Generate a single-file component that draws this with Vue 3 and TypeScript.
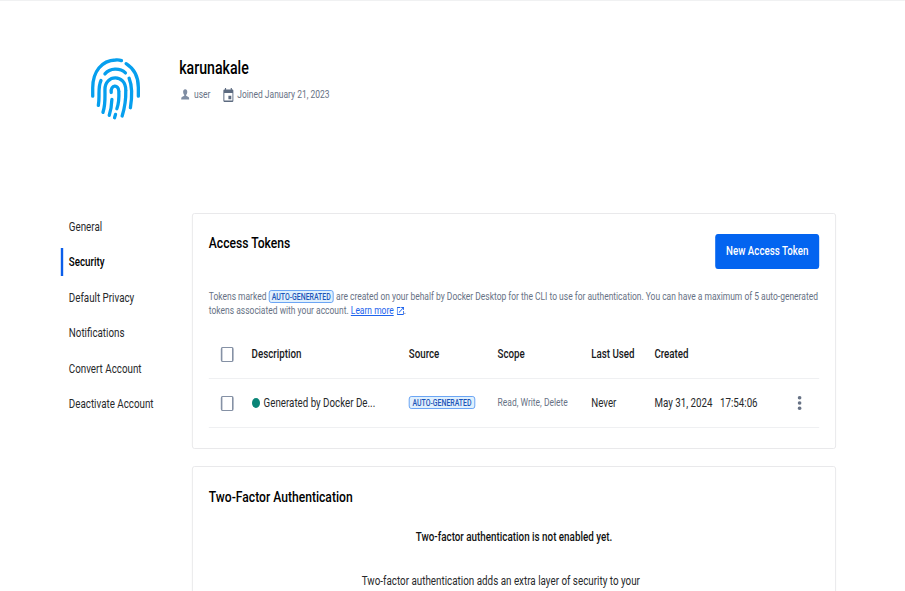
<script setup lang="ts">
const nav: string[] = ['General', 'Security', 'Default Privacy', 'Notifications', 'Convert Account', 'Deactivate Account']
const active = 'Security'
</script>

<template>
  <div class="page">
    <header class="profile">
      <svg class="avatar" viewBox="60 50 150 190" preserveAspectRatio="none">
        <path d="M67 168V143C67 95 94 60 136 59Q146 58 154 61" />
        <path d="M168 70C192 85 205 112 205 142V168" />
        <path d="M104 101C119 83 149 82 166 98" />
        <path d="M92 121C85 136 86 148 86 168Q86 183 84 196" />
        <path d="M177 114C186 136 186 172 181 203" />
        <path d="M98 217C106 193 104 174 104 148C104 102 167 100 167 150Q168 190 156 228" />
        <path d="M123 157C120 133 146 132 146 153C147 174 146 190 140 206" />
        <path d="M125 178Q124 204 117 226" />
        <path d="M136 223L133 233" />
      </svg>
      <div class="who">
        <h1>karunakale</h1>
        <div class="meta">
          <svg class="person" viewBox="0 0 12 12" preserveAspectRatio="none"><path d="M6 .3C3.8.3 3 1.8 3.2 3.5c.2 1.6.9 2.4 1.5 2.8v1.1L1.5 8.7Q.5 9.2.5 11.5h11q0-2.3-1-2.8L7.3 7.4V6.3c.6-.4 1.3-1.2 1.5-2.8C9 1.8 8.200.3 6 .3z" /></svg>
          <span class="role">user</span>
          <svg class="cal" viewBox="0 0 18 20" preserveAspectRatio="none"><path d="M14 11H9v5h5v-5zM13 0v2H5V0H3v2H2C.9 2 0 2.900 0 4v14c0 1.100.9 2 2 2h14c1.100 0 2-.9 2-2V4c0-1.100-.9-2-2-2h-1V0h-2zm3 18H2V7h14v11z" /></svg>
          <span class="joined">Joined January 21, 2023</span>
        </div>
      </div>
    </header>

    <div class="body">
      <nav>
        <a v-for="item in nav" :key="item" :class="{ active: item === active }">{{ item }}</a>
      </nav>
      <main>
        <section class="card tokens">
          <div class="card-head">
            <h2>Access Tokens</h2>
            <button>New Access Token</button>
          </div>
          <p class="note">
            <span class="line first">Tokens marked <span class="chip">AUTO-GENERATED</span> are created on your behalf by Docker Desktop for the CLI to use for authentication. You can have a maximum of 5 auto-generated</span>
            <span class="line">tokens associated with your account. <a class="link">Learn more</a><svg class="ext" viewBox="0 0 18 18" preserveAspectRatio="none"><path d="M16 16H2V2h7V0H2C.9 0 0 .9 0 2v14c0 1.100.9 2 2 2h14c1.100 0 2-.9 2-2V9h-2v7zM11 0v2h3.600L4.800 11.800l1.400 1.400L16 3.400V7h2V0h-7z" /></svg>.</span>
          </p>
          <div class="row head">
            <i class="check"></i><span>Description</span><span>Source</span><span>Scope</span><span>Last Used</span><span>Created</span><span></span>
          </div>
          <div class="row">
            <i class="check"></i>
            <span class="desc"><i class="dot"></i>Generated by Docker De...</span>
            <span class="source"><span class="chip">AUTO-GENERATED</span></span>
            <span class="scope">Read, Write, Delete</span>
            <span>Never</span>
            <span class="created"><span>May 31, 2024</span><span>17:54:06</span></span>
            <svg class="more" viewBox="0 0 4 16" preserveAspectRatio="none"><circle cx="2" cy="2" r="2" /><circle cx="2" cy="8" r="2" /><circle cx="2" cy="14" r="2" /></svg>
          </div>
        </section>
        <section class="card twofa">
          <h2>Two-Factor Authentication</h2>
          <p class="strong">Two-factor authentication is not enabled yet.</p>
          <p class="detail">Two-factor authentication adds an extra layer of security to your</p>
        </section>
      </main>
    </div>
  </div>
</template>

<style>
html, body { background: #fff; overflow: hidden; }
</style>

<style scoped>
* { box-sizing: border-box; }
/* Condensed canvas: everything is laid out at 1.25x width and narrowed. */
.page {
  width: 1131.25px;
  height: 591px;
  overflow: hidden;
  transform: scaleX(0.8);
  transform-origin: 0 0;
  border-top: 1px solid #f0f1f2;
  font-family: Roboto, "Liberation Sans", sans-serif;
  font-size: 12.3px;
  line-height: 16px;
  color: #27292b;
  white-space: nowrap;
}
h1, h2, p { margin: 0; font-weight: 500; }
.profile { display: flex; height: 211.5px; padding: 56px 0 0 112.5px; }
.avatar { width: 62px; height: 63px; fill: none; stroke: #069fee; stroke-width: 10; stroke-linecap: round; }
.who { padding-left: 49.5px; }
h1 { font-size: 17.7px; line-height: 22px; color: #000; }
.meta { display: flex; align-items: center; height: 16px; margin-top: 8px; font-size: 10.6px; color: #677285; }
.person { width: 11px; height: 11px; margin: -1px 5.5px 0 2px; fill: #7f8da3; }
.cal { width: 13px; height: 14px; margin: -1px 5px 0 15.5px; fill: #5d6b80; }
.body { display: flex; }
nav { width: 164px; margin: 0 0 0 76px; display: flex; flex-direction: column; gap: 7.5px; }
nav a { height: 28px; line-height: 28px; padding-left: 7px; border-left: 3.5px solid transparent; font-size: 12.25px; }
nav a.active { border-color: #0b5eea; font-weight: 500; color: #000; }
.card { width: 805px; border: 1px solid #e6e7e9; border-width: 1px 1.25px; border-radius: 3px; padding: 0 20px; }
.tokens { height: 236px; }
.card-head { display: flex; justify-content: space-between; padding-top: 20.5px; height: 75px; }
h2 { font-size: 15.15px; line-height: 19px; color: #000; }
button { width: 130px; height: 35px; border: 0; border-radius: 3.5px; background: #0364f0; color: #fff; font: 500 12.2px/32px Roboto, sans-serif; padding: 0 0 1px; }
.note { font-size: 10.6px; color: #677285; font-weight: 400; height: 41px; }
.line { display: block; line-height: 14px; }
.line.first { line-height: 15px; letter-spacing: -0.01px; }
.chip { display: inline-block; height: 13px; line-height: 12px; padding: 0 3.5px; border: 1px solid #5b9bf3; border-radius: 3px; background: #e0f0fd; color: #1b55b8; font-size: 8.7px; font-weight: 500; }
.line .chip { padding: 0 3px; }
.link { color: #1d63ed; text-decoration: underline; }
.ext { width: 9px; height: 8px; margin: 0 0 -1px 3.5px; fill: #1d63ed; }
.row { display: grid; grid-template-columns: 53.5px 196.5px 111px 117px 79px 174px 1fr; align-items: center; height: 49px; border-bottom: 1px solid #eff0f2; font-size: 12.2px; }
.row.head { font-weight: 500; color: #17191b; }
.check { width: 16px; height: 15px; margin: 1px 0 0 15px; border: 1.5px solid #8591a5; border-width: 1.5px 2px; border-radius: 2px; }
.dot { display: inline-block; width: 10px; height: 10px; border-radius: 50%; background: #0a8577; margin: 0 5px -1px 0; }
.source { display: flex; }
.row .scope { font-size: 10.6px; color: #677285; }
.created { display: flex; gap: 9.5px; }
.more { width: 5px; height: 14px; margin-left: 5px; fill: #677285; }
.twofa { height: 160px; margin-top: 17.5px; padding-top: 20.5px; }
.twofa p { text-align: center; font-weight: 400; margin-top: 28px; }
.twofa p.strong { font-weight: 500; margin-top: 22.5px; color: #111; }
.twofa p.detail { padding-right: 33px; }
</style>
